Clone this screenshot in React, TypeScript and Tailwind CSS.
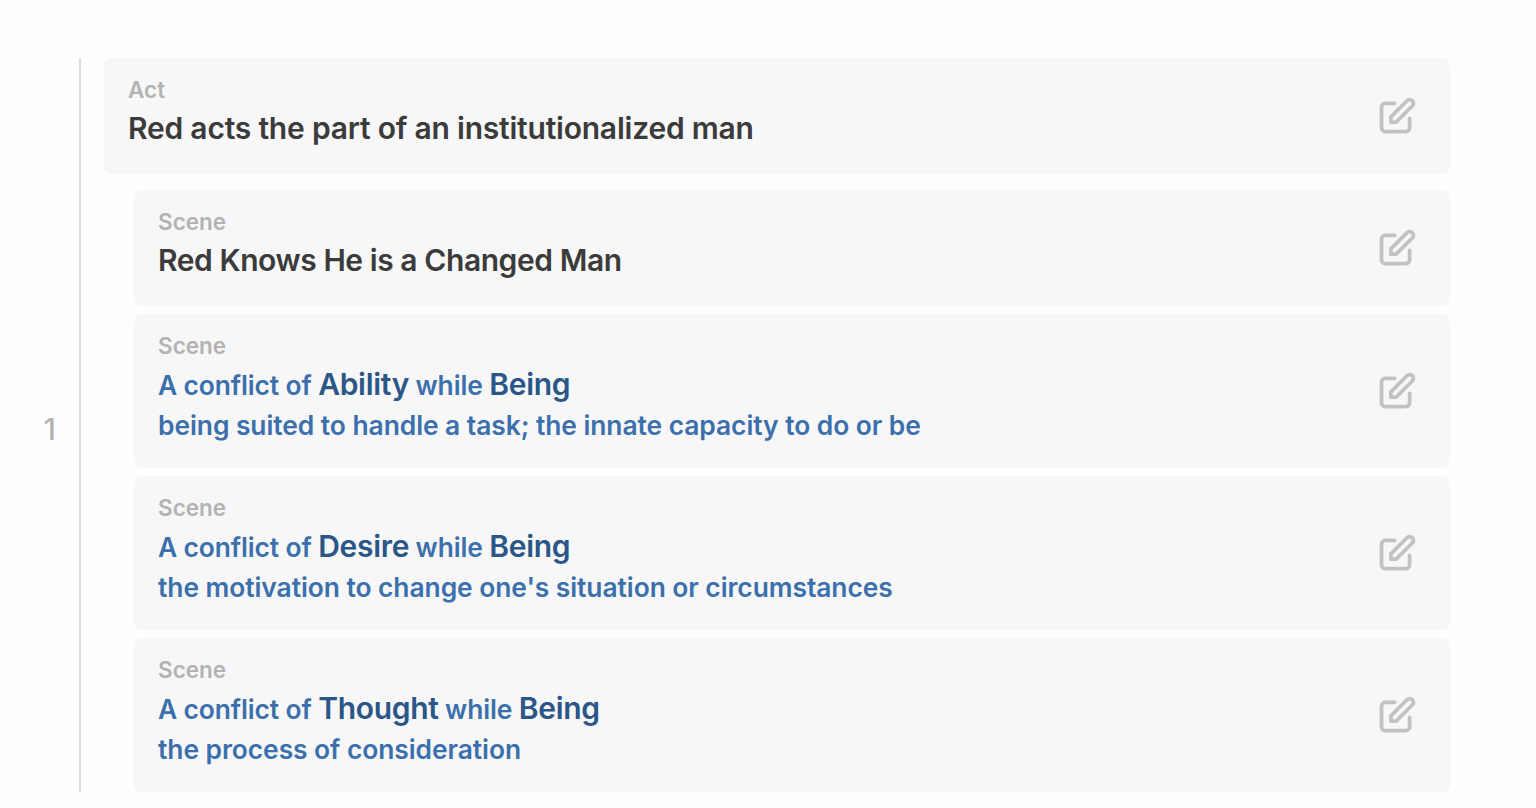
import { FC, ReactNode } from "react";

const EditIcon: FC = () => (
  <svg
    className="size-[45px] shrink-0 text-[#c2c2c2]"
    viewBox="0 0 24 24"
    fill="none"
    stroke="currentColor"
    strokeWidth={2}
    strokeLinecap="round"
    strokeLinejoin="round"
  >
    <path d="M11 5H6a2 2 0 00-2 2v11a2 2 0 002 2h11a2 2 0 002-2v-5m-1.414-9.414a2 2 0 112.828 2.828L11.828 15H9v-2.828l8.586-8.586z" />
  </svg>
);

interface CardProps {
  label: string;
  children: ReactNode;
}

const Card: FC<CardProps> = ({ label, children }) => (
  <div className="flex items-center justify-between rounded-[7px] bg-[#f7f7f7] pt-4 pr-[31.5px] pb-6 pl-6">
    <div>
      <div className="text-[22.5px] leading-8 font-semibold text-[#b3b3b3]">
        {label}
      </div>
      {children}
    </div>
    <button type="button" aria-label="Edit" className="mt-2">
      <EditIcon />
    </button>
  </div>
);

interface TitleProps {
  className: string;
  children: ReactNode;
}

const Title: FC<TitleProps> = ({ className, children }) => (
  <h2
    className={`text-[30px] leading-[44px] font-semibold text-[#3b3b3b] ${className}`}
  >
    {children}
  </h2>
);

const Term: FC<{ children: ReactNode }> = ({ children }) => (
  <span className="text-[30px] font-semibold tracking-[-0.3px] text-[#2a5688]">
    {children}
  </span>
);

const scenes = [
  {
    conflict: "Ability",
    description:
      "being suited to handle a task; the innate capacity to do or be",
  },
  {
    conflict: "Desire",
    description: "the motivation to change one's situation or circumstances",
  },
  {
    conflict: "Thought",
    description: "the process of consideration",
  },
];

const App: FC = () => {
  return (
    <div className="flex h-[808px] bg-[#fefefe] pt-[58px] pr-[86px] pb-4 font-['Inter',sans-serif]">
      <div className="flex w-[81px] shrink-0 items-center justify-end border-r-2 border-[#dedee0] pt-2 pr-[23px] text-[30px] font-medium text-[#b3b3b3]">
        1
      </div>
      <div className="ml-[23px] flex-1">
        <Card label="Act">
          <Title className="tracking-[-0.21px]">
            Red acts the part of an institutionalized man
          </Title>
        </Card>
        <div className="mt-4 ml-[30px] flex flex-col gap-2">
          <Card label="Scene">
            <Title className="tracking-[-0.43px]">
              Red Knows He is a Changed Man
            </Title>
          </Card>
          {scenes.map(({ conflict, description }) => (
            <Card key={conflict} label="Scene">
              <div className="mb-0.5 text-[26.4px] font-semibold tracking-[-0.06px] text-[#3b70ac]">
                <p className="leading-[45px] tracking-[-0.12px]">
                  A conflict of <Term>{conflict}</Term> while <Term>Being</Term>
                </p>
                <p className="leading-[34px]">{description}</p>
              </div>
            </Card>
          ))}
        </div>
      </div>
    </div>
  );
};

export default App;
